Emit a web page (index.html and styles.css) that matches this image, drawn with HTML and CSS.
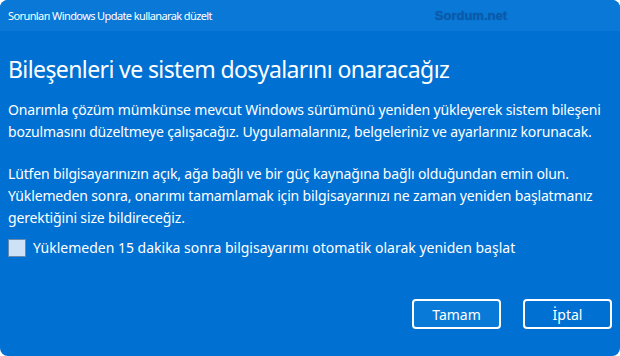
FILE: index.html
```html
<!DOCTYPE html>
<html lang="tr">
<head>
<meta charset="utf-8">
<link rel="stylesheet" href="styles.css">
</head>
<body>
<div class="window">
  <div class="titlebar">
    <span class="title">Sorunları Windows Update kullanarak düzelt</span>
    <span class="brand">Sordum.net</span>
  </div>
  <div class="content">
    <h1 class="heading">Bileşenleri ve sistem dosyalarını onaracağız</h1>
    <p class="para">Onarımla çözüm mümkünse mevcut Windows sürümünü yeniden yükleyerek sistem bileşeni bozulmasını düzeltmeye çalışacağız. Uygulamalarınız, belgeleriniz ve ayarlarınız korunacak.</p>
    <p class="para para-last">Lütfen bilgisayarınızın açık, ağa bağlı ve bir güç kaynağına bağlı olduğundan emin olun. Yüklemeden sonra, onarımı tamamlamak için bilgisayarınızı ne zaman yeniden başlatmanız gerektiğini size bildireceğiz.</p>
    <label class="check">
      <span class="box"></span>
      <span class="check-label">Yüklemeden 15 dakika sonra bilgisayarımı otomatik olarak yeniden başlat</span>
    </label>
    <div class="actions">
      <button class="btn btn-primary">Tamam</button>
      <button class="btn">İptal</button>
    </div>
  </div>
</div>
</body>
</html>
```
FILE: styles.css
```css
html, body {
  margin: 0;
  padding: 0;
  background: #ffffff;
}
.window {
  width: 620px;
  height: 356px;
  background: #0071d3;
  border-radius: 8px;
  overflow: hidden;
  display: flex;
  flex-direction: column;
  font-family: "Noto Sans", "Open Sans", sans-serif;
  color: #ffffff;
}
.titlebar {
  height: 31px;
  background: #0a78d6;
  display: flex;
  align-items: center;
  justify-content: space-between;
  padding: 0 113px 0 8px;
  flex: none;
}
.title {
  font-size: 11px;
  letter-spacing: -0.6px;
}
.brand {
  font-family: "Liberation Sans", sans-serif;
  font-weight: bold;
  font-size: 13px;
  color: #0a5aa8;
  text-shadow: 0 0 1px #0b62b8;
}
.content {
  flex: 1;
  padding: 22px 8px 0 8px;
  display: flex;
  flex-direction: column;
}
.heading {
  margin: 0 0 14px 0;
  font-weight: normal;
  font-size: 23px;
  line-height: 32px;
  letter-spacing: -0.6px;
}
.para {
  margin: 0 0 20px 0;
  font-size: 14px;
  line-height: 22px;
  letter-spacing: -0.15px;
}
.para-last {
  margin-bottom: 9px;
}
.check {
  display: flex;
  align-items: center;
  gap: 7px;
  font-size: 14px;
}
.box {
  width: 16px;
  height: 16px;
  background: #cde2f7;
  border: 1px solid #6a8aab;
}
.actions {
  margin-top: auto;
  margin-bottom: 27px;
  display: flex;
  justify-content: flex-end;
  gap: 22px;
}
.btn {
  width: 89px;
  height: 30px;
  border: 2px solid #ffffff;
  border-radius: 4px;
  background: transparent;
  color: #ffffff;
  font-family: "Noto Sans", "Open Sans", sans-serif;
  font-size: 14px;
  padding: 0;
}
.btn-primary {
  background: #0a7ad8;
}
```
